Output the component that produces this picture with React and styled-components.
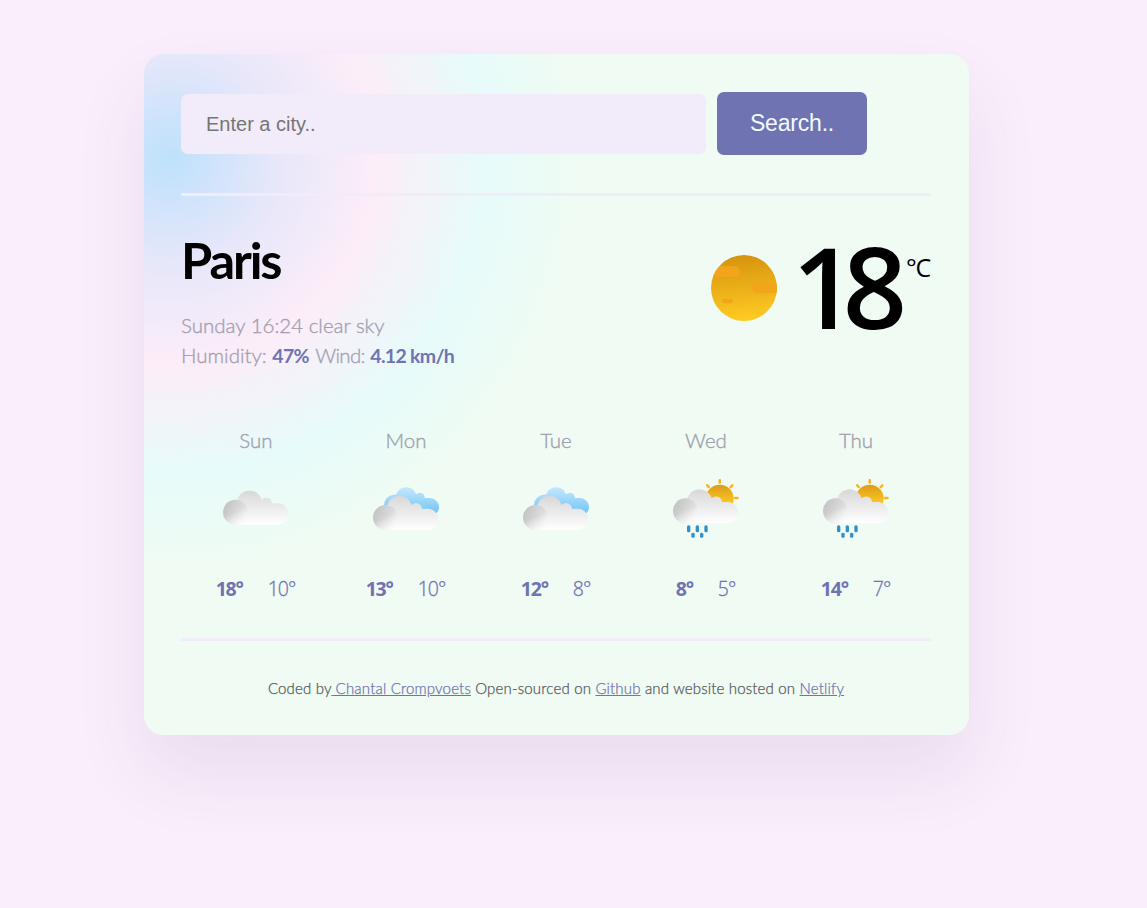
import React from "react";
import styled, { createGlobalStyle } from "styled-components";

const GlobalStyle = createGlobalStyle`
  * { box-sizing: border-box; }
  body {
    margin: 0;
    background: #faeefc;
    font-family: Lato, "Open Sans", sans-serif;
  }
`;

const Page = styled.div`
  min-height: 908px;
  padding: 54px 178px 0 144px;
  overflow: hidden;
`;

const Card = styled.main`
  width: 825px;
  height: 681px;
  padding: 38px 38px 0 37px;
  border-radius: 20px;
  background: radial-gradient(
    circle at 3.1% 15.3%,
    rgb(190, 225, 252) 0%,
    rgb(231, 231, 250) 10.8%,
    rgb(252, 237, 248) 20.8%,
    rgb(231, 251, 251) 32%,
    rgb(240, 251, 243) 41.5%
  );
  box-shadow: 0 37.5px 75px rgba(65, 50, 90, 0.09);
`;

const SearchForm = styled.form`
  display: flex;
  align-items: center;
  gap: 11px;
  height: 63px;
`;

const SearchInput = styled.input`
  width: 525px;
  height: 60px;
  margin-top: 1px;
  padding: 0 25px;
  border: 0;
  border-radius: 7px;
  background: #f2ebfa;
  font: 20px "Liberation Sans", Arial, sans-serif;
  &::placeholder { color: #757575; }
`;

const SearchButton = styled.button`
  width: 150px;
  height: 63px;
  padding: 0;
  border: 0;
  border-radius: 7px;
  background: #7073b2;
  color: #f0faff;
  font: 23px "Liberation Sans", Arial, sans-serif;
  letter-spacing: -0.2px;
`;

const Rule = styled.hr`
  height: 3px;
  margin: ${(p) => p.$top}px 0 0;
  border: 0;
  background: #f2ebfa;
`;

const Overview = styled.section`
  display: flex;
  justify-content: space-between;
  height: 232px;
`;

const City = styled.h1`
  margin: 33px 0 0;
  font-size: 50.5px;
  font-weight: 700;
  line-height: 62px;
  letter-spacing: -2.1px;
`;

const Details = styled.p`
  margin: 19px 0 0;
  color: #a3a0b4;
  font-size: 20.5px;
  font-weight: 300;
  line-height: 30px;
  white-space: nowrap;
  -webkit-text-stroke: 0.35px currentColor;
  strong {
    color: #7073b2;
    font-size: 19.5px;
    font-weight: 700;
    letter-spacing: -0.7px;
    -webkit-text-stroke: 0;
  }
`;

const Wind = styled.span`
  margin-left: 1px;
  letter-spacing: -0.7px;
`;

const Current = styled.div`
  display: flex;
  align-items: flex-start;
  padding-top: 59px;
`;

const Temperature = styled.span`
  width: 114px;
  margin: -11px 0 0 15px;
  font: 600 112.5px/84px "Open Sans", sans-serif;
  letter-spacing: -13.5px;
  white-space: nowrap;
`;

const Unit = styled.span`
  width: 25px;
  margin-top: -2px;
  font: 400 25px/28px "Open Sans", sans-serif;
  letter-spacing: -1.2px;
`;

const Forecast = styled.section`
  display: grid;
  grid-template-columns: repeat(5, 150px);
  height: 210px;
`;

const Day = styled.div`
  display: flex;
  flex-direction: column;
  align-items: center;
`;

const DayName = styled.div`
  margin: -1px 0 21px;
  color: #9ea1ad;
  font-size: 20.5px;
  font-weight: 300;
  line-height: 26px;
  -webkit-text-stroke: 0.35px currentColor;
`;

const Range = styled.div`
  display: flex;
  gap: 25px;
  margin: 33px 1px 0 0;
  color: #7073b2;
  font: 300 19.5px/24px "Open Sans", sans-serif;
  letter-spacing: -1px;
  -webkit-text-stroke: 0.3px currentColor;
  strong {
    font-weight: 700;
    letter-spacing: -1.2px;
    -webkit-text-stroke: 0;
  }
`;

const Footer = styled.footer`
  margin-top: 37px;
  color: #55585c;
  font-size: 15px;
  font-weight: 300;
  line-height: 20px;
  letter-spacing: 0.18px;
  text-align: center;
  white-space: nowrap;
  -webkit-text-stroke: 0.25px currentColor;
`;

const FooterLink = styled.a`
  color: #7073b2;
  text-decoration: underline;
`;

const SkyIcon = styled.svg`
  flex: none;
  display: block;
`;

function ClearSky() {
  return (
    <SkyIcon width="66" height="66" viewBox="0 0 198 198">
      <defs>
        <linearGradient id="disc" x1="0.45" y1="0" x2="0.55" y2="1">
          <stop offset="0" stopColor="#d7930f" />
          <stop offset="1" stopColor="#ffcc23" />
        </linearGradient>
        <clipPath id="discClip"><circle cx="99" cy="99" r="99" /></clipPath>
      </defs>
      <circle cx="99" cy="99" r="99" fill="url(#disc)" />
      <g clipPath="url(#discClip)" fill="#f2a51b">
        <rect x="-20" y="34" width="106" height="32" rx="16" />
        <rect x="122" y="84" width="100" height="31" rx="15" />
        <rect x="33" y="132" width="33" height="13" rx="6" />
      </g>
    </SkyIcon>
  );
}

function WhiteCloud({ id, y }) {
  return (
    <g transform={`translate(1 ${y})`}>
      <defs>
        <linearGradient id={`${id}-body`} gradientUnits="userSpaceOnUse" x1="0" y1="48" x2="0" y2="152">
          <stop offset="0" stopColor="#d7d7d8" />
          <stop offset="1" stopColor="#ffffff" />
        </linearGradient>
        <linearGradient id={`${id}-puff`} x1="0.1" y1="0.3" x2="0.9" y2="0.7">
          <stop offset="0" stopColor="#c6c6c7" />
          <stop offset="0.8" stopColor="#e0e0e0" />
          <stop offset="1" stopColor="#e8e8e8" />
        </linearGradient>
        <linearGradient id={`${id}-fade`} x1="0.2" y1="0.1" x2="0.65" y2="1">
          <stop offset="0.45" stopColor="#ffffff" stopOpacity="0" />
          <stop offset="1" stopColor="#ffffff" stopOpacity="0.85" />
        </linearGradient>
      </defs>
      <path
        d="M43 152A37 37 0 0 1 43 78L48 77A38 38 0 0 1 121 77A18 18 0 0 1 152 88H169A32 32 0 0 1 169 152Z"
        fill={`url(#${id}-body)`}
      />
      <circle cx="42.500" cy="114.500" r="37.500" fill={`url(#${id}-puff)`} />
      <circle cx="42.500" cy="114.500" r="37.500" fill={`url(#${id}-fade)`} />
    </g>
  );
}

function Clouds({ id }) {
  return (
    <SkyIcon width="70" height="70" viewBox="0 0 210 210">
      <WhiteCloud id={id} y={0} />
    </SkyIcon>
  );
}

function BrokenClouds({ id }) {
  return (
    <SkyIcon width="70" height="70" viewBox="0 0 210 210">
      <defs>
        <linearGradient id={`${id}-blue`} gradientUnits="userSpaceOnUse" x1="0" y1="39" x2="0" y2="125">
          <stop offset="0" stopColor="#c5e8ff" />
          <stop offset="1" stopColor="#6cc1f3" />
        </linearGradient>
      </defs>
      <path
        d="M70 124A31 31 0 0 1 70 62L76 61A31 31 0 0 1 135 61A15 15 0 0 1 161 72H177A27 27 0 0 1 177 126Z"
        fill={`url(#${id}-blue)`}
      />
      <WhiteCloud id={id} y={16} />
    </SkyIcon>
  );
}

function SunShower({ id }) {
  return (
    <SkyIcon width="70" height="70" viewBox="0 0 210 210">
      <defs>
        <linearGradient id={`${id}-sun`} x1="0" y1="0" x2="0" y2="1">
          <stop offset="0" stopColor="#dc9c1a" />
          <stop offset="0.75" stopColor="#ffcd25" />
        </linearGradient>
      </defs>
      <circle cx="146" cy="74" r="42" fill={`url(#${id}-sun)`} />
      <g fill="#fdb21e">
        {[-45, 0, 45, 90].map((angle) => (
          <rect key={angle} x="142.500" y="15" width="7.500" height="14" rx="3" transform={`rotate(${angle} 146 72)`} />
        ))}
      </g>
      <WhiteCloud id={id} y={-4} />
      <g fill="#3190cb">
        {[53, 79, 105].map((x) => <rect key={x} x={x - 5} y="154" width="10" height="21" rx="4.500" />)}
        {[66, 92].map((x) => <rect key={x} x={x - 5} y="176" width="10" height="15" rx="4.500" />)}
      </g>
    </SkyIcon>
  );
}

const days = [
  { name: "Sun", Icon: Clouds, high: 18, low: 10 },
  { name: "Mon", Icon: BrokenClouds, high: 13, low: 10 },
  { name: "Tue", Icon: BrokenClouds, high: 12, low: 8 },
  { name: "Wed", Icon: SunShower, high: 8, low: 5 },
  { name: "Thu", Icon: SunShower, high: 14, low: 7 },
];

export default function App() {
  return (
    <Page>
      <GlobalStyle />
      <Card>
        <SearchForm onSubmit={(e) => e.preventDefault()}>
          <SearchInput placeholder="Enter a city.." />
          <SearchButton type="submit">Search..</SearchButton>
        </SearchForm>
        <Rule $top={38} />
        <Overview>
          <div>
            <City>Paris</City>
            <Details>
              Sunday 16:24 clear sky
              <br />
              Humidity: <strong>47%</strong> <Wind>Wind:</Wind> <strong>4.12 km/h</strong>
            </Details>
          </div>
          <Current>
            <ClearSky />
            <Temperature>18</Temperature>
            <Unit>°C</Unit>
          </Current>
        </Overview>
        <Forecast>
          {days.map(({ name, Icon, high, low }) => (
            <Day key={name}>
              <DayName>{name}</DayName>
              <Icon id={name} />
              <Range>
                <strong>{high}°</strong>
                <span>{low}°</span>
              </Range>
            </Day>
          ))}
        </Forecast>
        <Rule $top={0} />
        <Footer>
          Coded by<FooterLink href="#author"> Chantal Crompvoets</FooterLink> Open-sourced on{" "}
          <FooterLink href="#source">Github</FooterLink> and website hosted on{" "}
          <FooterLink href="#host">Netlify</FooterLink>
        </Footer>
      </Card>
    </Page>
  );
}
